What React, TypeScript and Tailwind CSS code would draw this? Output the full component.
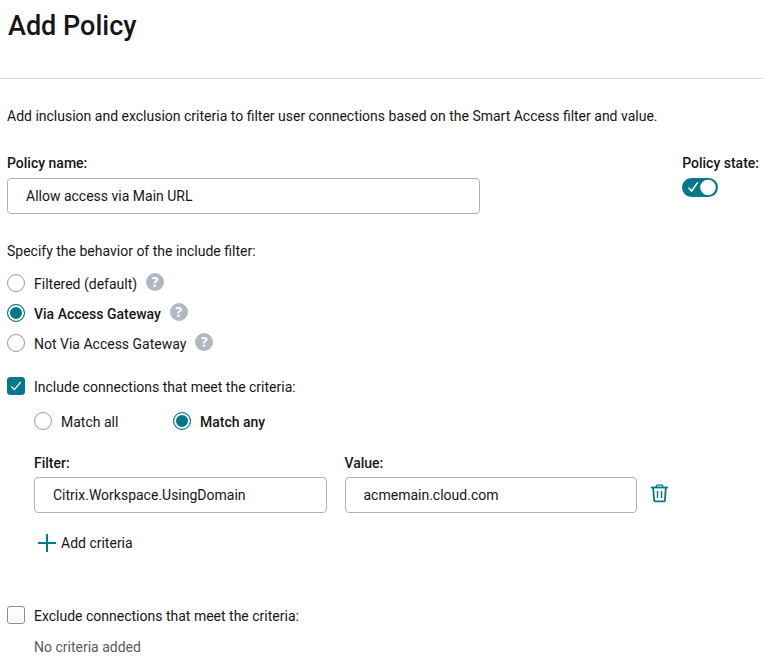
import { useState } from "react";
import type { InputHTMLAttributes } from "react";

const behaviors = [
  { id: "filtered", label: "Filtered (default)" },
  { id: "gateway", label: "Via Access Gateway" },
  { id: "not-gateway", label: "Not Via Access Gateway" },
];

const matchModes = [
  { id: "all", label: "Match all" },
  { id: "any", label: "Match any" },
];

const fieldClass =
  "block h-9 w-full min-w-0 rounded-[4px] border border-[#b0b0b0] bg-white px-[18px] outline-none focus:border-[#02788a]";

function Radio(props: InputHTMLAttributes<HTMLInputElement>) {
  return (
    <input
      type="radio"
      className="size-[18px] shrink-0 appearance-none rounded-full border border-[#999999] bg-white checked:border-[#02788a] checked:bg-[#02788a] checked:shadow-[inset_0_0_0_2px_white]"
      {...props}
    />
  );
}

function Checkbox(props: InputHTMLAttributes<HTMLInputElement>) {
  return (
    <span className="grid size-[18px] shrink-0">
      <input
        type="checkbox"
        className="peer col-start-1 row-start-1 size-[18px] appearance-none rounded-[3px] border border-[#8c8c8c] bg-white checked:border-[#02788a] checked:bg-[#02788a]"
        {...props}
      />
      <svg
        viewBox="0 0 18 18"
        className="pointer-events-none invisible col-start-1 row-start-1 size-[18px] peer-checked:visible"
        aria-hidden="true"
      >
        <path d="M4.3 9.5 7.4 12.6 13.7 5" fill="none" stroke="#fff" strokeWidth="1.2" />
      </svg>
    </span>
  );
}

function HelpButton({ topic }: { topic: string }) {
  return (
    <button
      type="button"
      aria-label={`Help: ${topic}`}
      className="mb-[2px] flex size-[18px] items-center justify-center rounded-full bg-[#b1b8c4] font-['Open_Sans',sans-serif] text-[14px] leading-[18px] font-bold text-white"
    >
      ?
    </button>
  );
}

export default function App() {
  const [name, setName] = useState("Allow access via Main URL");
  const [enabled, setEnabled] = useState(true);
  const [behavior, setBehavior] = useState("gateway");
  const [include, setInclude] = useState(true);
  const [exclude, setExclude] = useState(false);
  const [match, setMatch] = useState("any");
  const [filter, setFilter] = useState("Citrix.Workspace.UsingDomain");
  const [value, setValue] = useState("acmemain.cloud.com");

  return (
    <main className="bg-white font-[Roboto,sans-serif] text-sm leading-5 text-[#161616]">
      <header className="border-b border-[#d9d9d9] px-2 pt-2 pb-[34px]">
        <h1 className="text-[27px] leading-9 font-medium">Add Policy</h1>
      </header>

      <form className="pt-[27px] pr-1 pb-4 pl-[7px]">
        <p>
          Add inclusion and exclusion criteria to filter user connections based on the Smart Access
          filter and value.
        </p>

        {/* Name and state */}
        <div className="mt-[27px] flex justify-between gap-6">
          <div className="max-w-[473px] flex-1">
            <label htmlFor="policy-name" className="mb-[5px] block font-medium">
              Policy name:
            </label>
            <input
              id="policy-name"
              value={name}
              onChange={(e) => setName(e.target.value)}
              className={fieldClass}
            />
          </div>
          <div>
            <label htmlFor="policy-state" className="mb-[5px] block font-medium">
              Policy state:
            </label>
            <span className="grid w-9">
              <input
                id="policy-state"
                type="checkbox"
                role="switch"
                checked={enabled}
                onChange={(e) => setEnabled(e.target.checked)}
                className="col-start-1 row-start-1 h-[19px] w-9 appearance-none rounded-full bg-[#8c8c8c] checked:bg-[#02788a]"
              />
              <svg
                viewBox="0 0 36 19"
                className="pointer-events-none col-start-1 row-start-1 h-[19px] w-9"
                aria-hidden="true"
              >
                {enabled && (
                  <path d="M6.6 9.8 9.6 13 15.8 4.4" fill="none" stroke="#fff" strokeWidth="1.6" />
                )}
                <circle cx={enabled ? 26 : 10} cy="9.5" r="7.8" fill="#fff" />
              </svg>
            </span>
          </div>
        </div>

        {/* Include filter behavior */}
        <fieldset className="mt-[27px]">
          <legend className="mb-[7px]">Specify the behavior of the include filter:</legend>
          {behaviors.map((b) => (
            <div key={b.id} className="flex h-[30px] items-center gap-[9px]">
              <Radio
                id={b.id}
                name="behavior"
                checked={behavior === b.id}
                onChange={() => setBehavior(b.id)}
              />
              <label
                htmlFor={b.id}
                className={behavior === b.id ? "pt-[2px] font-medium" : "pt-[2px]"}
              >
                {b.label}
              </label>
              <HelpButton topic={b.label} />
            </div>
          ))}
        </fieldset>

        {/* Include criteria */}
        <section className="mt-[17px]">
          <label className="flex items-center gap-[9px]">
            <Checkbox checked={include} onChange={(e) => setInclude(e.target.checked)} />
            <span className="pt-[2px]">Include connections that meet the criteria:</span>
          </label>
          <div className="pl-[27px]">
            <div className="mt-[13px] flex">
              {matchModes.map((m) => (
                <label
                  key={m.id}
                  className={`flex w-[139px] items-center gap-[9px] ${match === m.id ? "font-medium" : ""}`}
                >
                  <Radio name="match" checked={match === m.id} onChange={() => setMatch(m.id)} />
                  <span className="pt-[2px]">{m.label}</span>
                </label>
              ))}
            </div>

            <div className="mt-[21px] flex max-w-[635px] items-end">
              <div className="flex-1">
                <label htmlFor="filter" className="mb-1 block font-medium">
                  Filter:
                </label>
                <input
                  id="filter"
                  value={filter}
                  onChange={(e) => setFilter(e.target.value)}
                  className={fieldClass}
                />
              </div>
              <div className="ml-[18px] flex-1">
                <label htmlFor="value" className="mb-1 block font-medium">
                  Value:
                </label>
                <input
                  id="value"
                  value={value}
                  onChange={(e) => setValue(e.target.value)}
                  className={fieldClass}
                />
              </div>
              <button
                type="button"
                aria-label="Delete criteria"
                className="ml-[13px] flex h-9 items-center pb-1"
              >
                <svg viewBox="0 0 19 19" className="size-[19px]" fill="none" stroke="#02788a">
                  <path d="M1 3.5H18" strokeWidth="1.8" />
                  <path d="M6.3 3.2V2Q6.3 1.2 7.1 1.2H11.9Q12.7 1.2 12.7 2V3.2" strokeWidth="1.3" />
                  <path d="M3.2 4 4.1 16.3Q4.2 17.4 5.3 17.4H13.7Q14.8 17.4 14.9 16.3L15.8 4" strokeWidth="1.8" />
                  <path d="M7.5 7V14M11.5 7V14" strokeWidth="1.4" />
                </svg>
              </button>
            </div>

            <button type="button" className="mt-5 flex items-center gap-[5px] pl-1">
              <svg viewBox="0 0 18 18" className="size-[18px]" aria-hidden="true">
                <path d="M9 0V18M0 9H18" stroke="#02788a" strokeWidth="2" />
              </svg>
              Add criteria
            </button>
          </div>
        </section>

        {/* Exclude criteria */}
        <section className="mt-[51px]">
          <label className="flex items-center gap-[9px]">
            <Checkbox checked={exclude} onChange={(e) => setExclude(e.target.checked)} />
            <span className="pt-[2px]">Exclude connections that meet the criteria:</span>
          </label>
          <p className="mt-[11px] pl-[27px] text-[#5c5c5c]">No criteria added</p>
        </section>
      </form>
    </main>
  );
}
